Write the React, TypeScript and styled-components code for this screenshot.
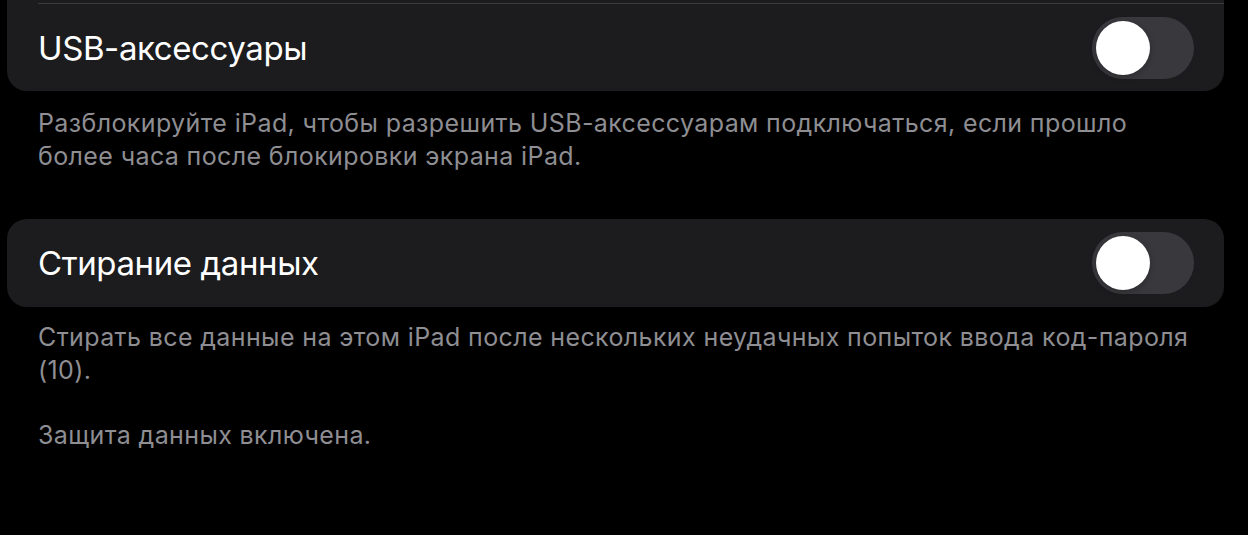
import { FunctionComponent } from 'react'
import styled, { createGlobalStyle } from 'styled-components'

const GlobalStyle = createGlobalStyle`
  html, body {
    margin: 0;
    padding: 0;
    background: #000;
  }
  body {
    font-family: Inter, "Noto Sans", sans-serif;
    -webkit-font-smoothing: antialiased;
  }
`

const Page = styled.div`
  width: 1248px;
  height: 535px;
  overflow: hidden;
  background: #000;
  padding: 0 24px 0 7px;
  box-sizing: border-box;
`

const Card = styled.div<{ $continued?: boolean }>`
  background: #1c1c1e;
  border-radius: ${(props) => (props.$continued ? '0 0 20px 20px' : '20px')};
  padding-left: 31px;
  padding-top: ${(props) => (props.$continued ? '3px' : '0')};
`

const Row = styled.div<{ $divider?: boolean }>`
  display: flex;
  align-items: center;
  justify-content: space-between;
  height: 88px;
  padding-right: 30px;
  box-sizing: border-box;
  border-top: ${(props) => (props.$divider ? '1px solid #3a3a3c' : 'none')};
`

const RowLabel = styled.span`
  font-size: 33px;
  color: #fff;
  letter-spacing: -0.4px;
`

const Track = styled.div`
  width: 102px;
  height: 62px;
  border-radius: 31px;
  background: #39393d;
  padding: 4px;
  box-sizing: border-box;
  display: flex;
  align-items: center;
`

const Knob = styled.div`
  width: 54px;
  height: 54px;
  border-radius: 50%;
  background: #fff;
  box-shadow: 0 2px 6px rgba(0, 0, 0, 0.25);
`

const Footer = styled.div<{ $top: number; $gap: number }>`
  padding: ${(props) => props.$top}px 0 0 31px;
  margin-bottom: ${(props) => props.$gap}px;
  color: #8e8e93;
  font-size: 25px;
  line-height: 33px;
  letter-spacing: 0.38px;
`

const Paragraph = styled.p`
  margin: 0 0 32px 0;

  &:last-child {
    margin-bottom: 0;
  }
`

const Toggle: FunctionComponent = () => (
  <Track>
    <Knob />
  </Track>
)

const App: FunctionComponent = () => (
  <Page>
    <GlobalStyle />
    <Card $continued>
      <Row $divider>
        <RowLabel>USB-аксессуары</RowLabel>
        <Toggle />
      </Row>
    </Card>
    <Footer $top={16} $gap={46}>
      <Paragraph>
        Разблокируйте iPad, чтобы разрешить USB-аксессуарам подключаться, если прошло
        <br />
        более часа после блокировки экрана iPad.
      </Paragraph>
    </Footer>
    <Card>
      <Row>
        <RowLabel>Стирание данных</RowLabel>
        <Toggle />
      </Row>
    </Card>
    <Footer $top={14} $gap={0}>
      <Paragraph>
        Стирать все данные на этом iPad после нескольких неудачных попыток ввода код-пароля
        <br />
        (10).
      </Paragraph>
      <Paragraph>Защита данных включена.</Paragraph>
    </Footer>
  </Page>
)

export default App
